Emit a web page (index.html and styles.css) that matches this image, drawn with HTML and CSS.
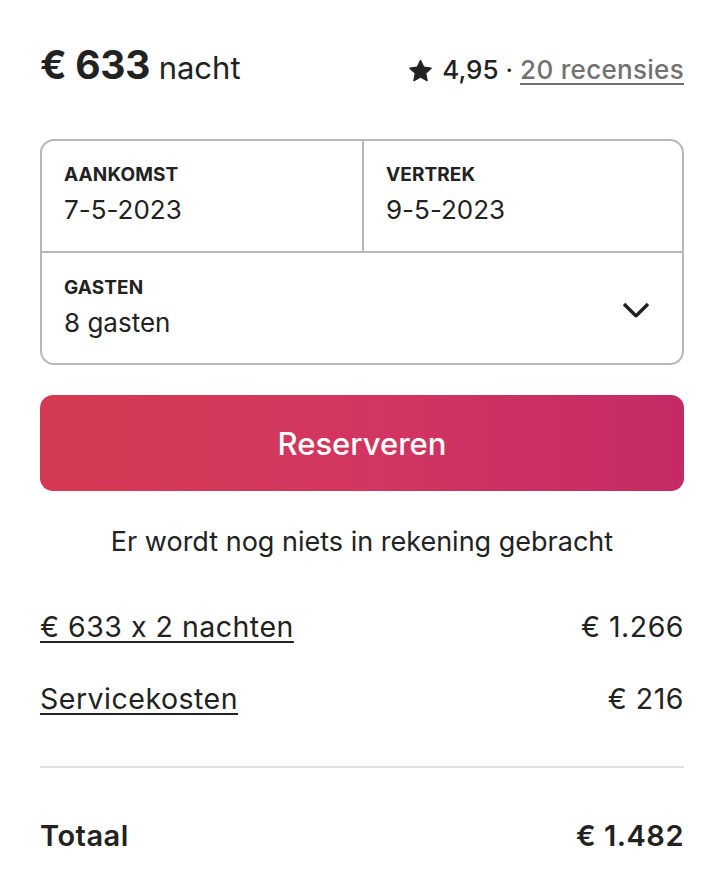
FILE: index.html
```html
<!DOCTYPE html>
<html lang="nl">
<head>
<meta charset="utf-8">
<title>Reserveren</title>
<link rel="stylesheet" href="styles.css">
</head>
<body>
<div class="panel">
  <div class="header">
    <div class="price"><span class="amount">€ 633</span> <span class="unit">nacht</span></div>
    <div class="rating">
      <svg class="star" viewBox="0 0 32 32" aria-hidden="true"><path d="M15.094 1.579l-4.124 8.885-9.860 1.270a1 1 0 0 0-.542 1.736l7.293 6.565-1.965 9.852a1 1 0 0 0 1.483 1.061L16 25.951l8.625 4.997a1 1 0 0 0 1.482-1.060l-1.965-9.853 7.293-6.565a1 1 0 0 0-.541-1.735l-9.860-1.271-4.127-8.885a1 1 0 0 0-1.814 0z"/></svg>
      <span class="score">4,95</span>
      <span class="dot">·</span>
      <a class="reviews" href="#">20 recensies</a>
    </div>
  </div>

  <div class="booking">
    <div class="dates">
      <div class="cell">
        <div class="label">AANKOMST</div>
        <div class="value">7-5-2023</div>
      </div>
      <div class="cell cell-right">
        <div class="label">VERTREK</div>
        <div class="value">9-5-2023</div>
      </div>
    </div>
    <div class="guests">
      <div class="guest-text">
        <div class="label">GASTEN</div>
        <div class="value">8 gasten</div>
      </div>
      <svg class="chevron" viewBox="0 0 32 32" aria-hidden="true"><path d="M28 12 16.707 23.293a1 1 0 0 1-1.414 0L4 12"/></svg>
    </div>
  </div>

  <button class="reserve">Reserveren</button>

  <p class="note">Er wordt nog niets in rekening gebracht</p>

  <div class="lines">
    <div class="line"><a href="#" class="line-label">€ 633 x 2 nachten</a><span>€ 1.266</span></div>
    <div class="line line-second"><a href="#" class="line-label">Servicekosten</a><span>€ 216</span></div>
  </div>

  <hr class="divider">

  <div class="total"><span>Totaal</span><span>€ 1.482</span></div>
</div>
</body>
</html>
```

FILE: styles.css
```css
* { box-sizing: border-box; }

html, body {
  margin: 0;
  padding: 0;
  background: #ffffff;
}

body {
  font-family: "Inter", "Roboto", sans-serif;
  font-feature-settings: "calt" 0;
  color: #222222;
}

.panel {
  padding: 42px 38px 0 40px;
}

.header {
  display: flex;
  justify-content: space-between;
  align-items: baseline;
  line-height: 46px;
}

.amount {
  font-size: 39px;
  font-weight: 700;
  letter-spacing: -0.3px;
}

.unit {
  margin-left: 4px;
  font-size: 31px;
  font-weight: 400;
}

.rating {
  display: flex;
  align-items: baseline;
  gap: 7px;
  font-size: 26px;
  font-weight: 500;
}

.star {
  width: 23px;
  height: 23px;
  fill: #222222;
  align-self: center;
  margin-right: 3px;
}

.dot {
  font-weight: 400;
}

.reviews {
  color: #717171;
  letter-spacing: 0.3px;
  text-decoration: underline;
  text-decoration-thickness: 2px;
  text-underline-offset: 4px;
}

.booking {
  margin-top: 43px;
  border: 2px solid #b8b8b8;
  border-radius: 14px;
}

.dates {
  display: grid;
  grid-template-columns: 1fr 1fr;
  border-bottom: 2px solid #b8b8b8;
}

.cell {
  padding: 22px 22px 23px;
}

.cell-right {
  border-left: 2px solid #b8b8b8;
}

.label {
  font-size: 19px;
  font-weight: 700;
  line-height: 24px;
  letter-spacing: 0.1px;
}

.value {
  margin-top: 5px;
  font-size: 26px;
  line-height: 36px;
  font-weight: 400;
}

.guests {
  display: flex;
  align-items: center;
  justify-content: space-between;
  padding: 0 30px 0 22px;
}

.guest-text {
  padding: 23px 0 22px;
}

.chevron {
  width: 32px;
  height: 32px;
  fill: none;
  stroke: #222222;
  stroke-width: 3.4;
  overflow: visible;
}

.reserve {
  display: block;
  width: 100%;
  height: 96px;
  margin-top: 30px;
  border: 0;
  border-radius: 13px;
  background: linear-gradient(to right, #d43a52 0%, #d23660 50%, #c52a66 100%);
  color: #ffffff;
  font-family: inherit;
  font-size: 31px;
  font-weight: 500;
}

.note {
  margin: 34px 0 0;
  text-align: center;
  font-size: 27px;
  line-height: 34px;
}

.lines {
  margin-top: 51px;
}

.line {
  display: flex;
  justify-content: space-between;
  font-size: 28.5px;
  letter-spacing: 0.5px;
  line-height: 34px;
}

.line-second {
  margin-top: 38px;
}

.line-label {
  color: #222222;
  text-decoration: underline;
  text-decoration-thickness: 2px;
  text-underline-offset: 4px;
}

.divider {
  margin: 50px 0 0;
  border: 0;
  border-top: 2px solid #e0e0e0;
}

.total {
  margin-top: 51px;
  display: flex;
  justify-content: space-between;
  font-size: 29px;
  letter-spacing: 0.5px;
  line-height: 34px;
  font-weight: 600;
}
```
